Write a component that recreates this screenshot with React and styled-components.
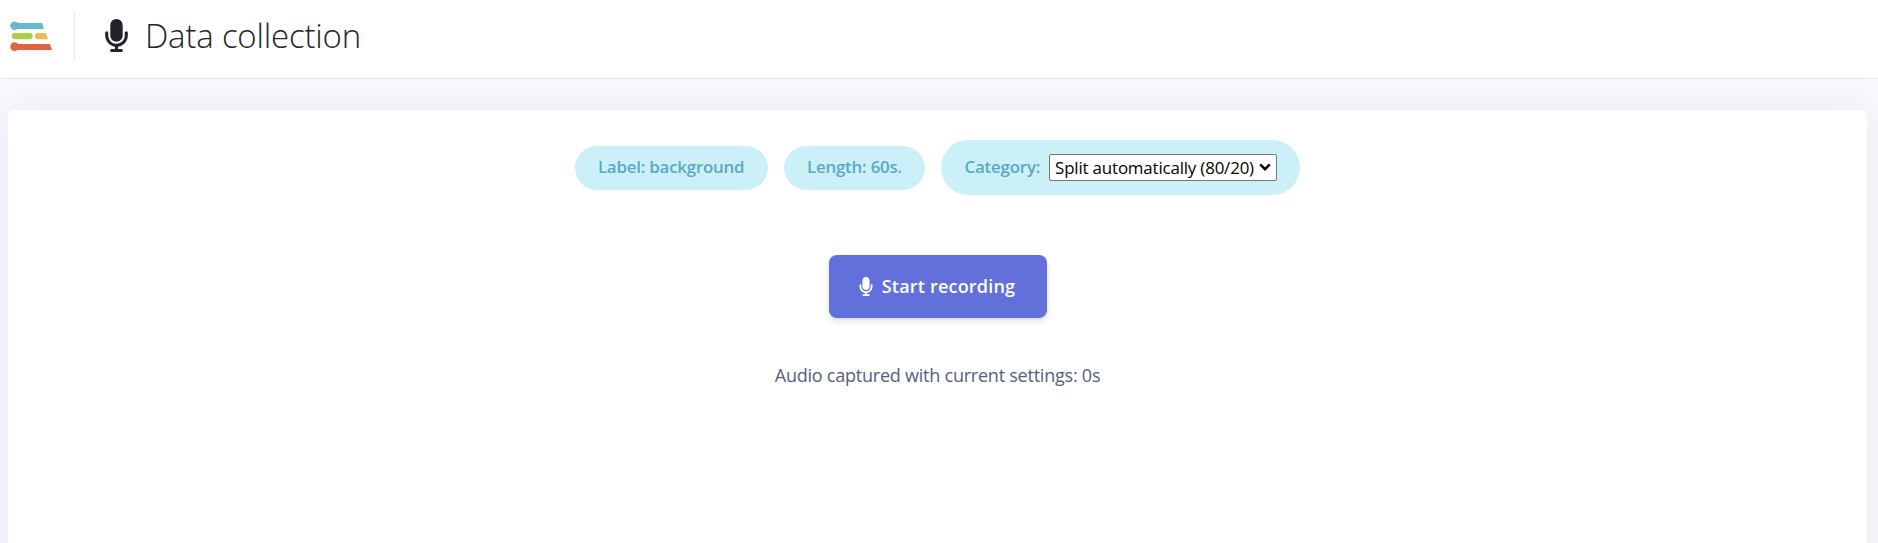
import React from "react";
import styled, { createGlobalStyle } from "styled-components";
import { FaMicrophone } from "react-icons/fa";

const GlobalStyle = createGlobalStyle`
  *, *::before, *::after { box-sizing: border-box; }
  body {
    margin: 0;
    background: #f8f9fe;
    color: #525f7f;
    font-family: "Open Sans", "Noto Sans", sans-serif;
    font-size: 18px;
    line-height: 1.5;
    overflow: hidden;
  }
`;

const Page = styled.div`
  display: flex;
  flex-direction: column;
  height: 100vh;
`;

const Header = styled.header`
  display: flex;
  align-items: center;
  flex: none;
  height: 79px;
  padding: 0 0 7px 10px;
  background: #fff;
  border-bottom: 1px solid #e3e5ee;
`;

const Logo = styled.svg`
  display: block;
  width: 42px;
  height: 32px;
`;

const Divider = styled.span`
  width: 1px;
  height: 48px;
  margin: 0 30px 0 22px;
  background: #e6e8ea;
`;

const MicIcon = styled(FaMicrophone)`
  flex: none;
  width: ${(p) => p.$width}px;
  height: ${(p) => p.$height}px;
`;

const Title = styled.h1`
  display: flex;
  align-items: center;
  gap: 17px;
  margin: 0;
  color: #212529;
  font-size: 33px;
  font-weight: 300;
  letter-spacing: -0.2px;
  line-height: 1;
`;

const Main = styled.main`
  display: flex;
  flex: 1;
  padding: 31px 11px 0 8px;
  overflow: hidden;
`;

const Card = styled.section`
  display: flex;
  flex: 1;
  flex-direction: column;
  align-items: center;
  height: 600px;
  padding-top: 30px;
  border-radius: 7px;
  background: #fff;
  box-shadow: 0 0 36px rgba(136, 152, 170, 0.15);
`;

const Settings = styled.div`
  display: flex;
  align-items: center;
  gap: 16px;
`;

const Pill = styled.div`
  display: flex;
  align-items: center;
  height: ${(p) => (p.$tall ? 55 : 44)}px;
  padding: 0 23.3px 1px;
  border-radius: 28px;
  background: #cbf0f8;
  color: #5ba8c4;
  font-size: 16.9px;
  font-weight: 600;
  letter-spacing: -0.22px;
  white-space: nowrap;
`;

const SelectBox = styled.span`
  display: grid;
  align-items: center;
  width: 228px;
  height: 27px;
  margin-left: 9px;

  & > * { grid-area: 1 / 1; }
`;

const Select = styled.select`
  appearance: none;
  width: 100%;
  height: 100%;
  padding: 0 5px;
  border: 1px solid #767676;
  border-radius: 2px;
  background: #fff;
  color: #000;
  font-family: inherit;
  font-size: 16.9px;
  font-weight: 400;
  letter-spacing: -0.17px;
`;

const Chevron = styled.svg`
  justify-self: end;
  width: 12px;
  height: 8px;
  margin-right: 6px;
  pointer-events: none;
`;

const RecordButton = styled.button`
  display: flex;
  align-items: center;
  justify-content: center;
  gap: 9px;
  width: 218px;
  height: 63px;
  margin-top: 60px;
  padding: 0 1px 1px 0;
  border: 0;
  border-radius: 8px;
  background: #6270db;
  color: #fff;
  font-family: inherit;
  font-size: 18px;
  font-weight: 600;
  letter-spacing: 0.2px;
  box-shadow: 0 4px 6px rgba(50, 50, 93, 0.11), 0 1px 3px rgba(0, 0, 0, 0.08);
`;

const Status = styled.p`
  margin: 44px 0 0;
  font-size: 18px;
  letter-spacing: -0.23px;
  line-height: 27px;
`;

export default function App() {
  return (
    <Page>
      <GlobalStyle />
      <Header>
        <Logo viewBox="0 0 42 32" aria-hidden="true">
          <path d="M4.5 3H32l2 6H4.5Z" fill="#67b9cc" />
          <circle cx="4.6" cy="5.8" r="4.3" fill="#67b9cc" />
          <rect x="1.7" y="13" width="21" height="6.2" rx="3.1" fill="#abd047" />
          <path d="M28 13h7.7l2.4 6.2H28a3.1 3.1 0 0 1 0-6.2Z" fill="#efb94d" />
          <path d="M4.5 24H40l2 6H4.5Z" fill="#e4633e" />
          <circle cx="4.6" cy="26.6" r="4.3" fill="#e4633e" />
        </Logo>
        <Divider />
        <Title>
          <MicIcon $width={23} $height={33} />
          Data collection
        </Title>
      </Header>
      <Main>
        <Card>
          <Settings>
            <Pill>Label: background</Pill>
            <Pill>Length: 60s.</Pill>
            <Pill as="label" $tall>
              Category:
              <SelectBox>
                <Select defaultValue="split">
                  <option value="split">Split automatically (80/20)</option>
                </Select>
                <Chevron viewBox="0 0 12 8" aria-hidden="true">
                  <path d="m1.2 1.4 4.8 4.8 4.8-4.8" fill="none" stroke="#000" strokeWidth="2.4" />
                </Chevron>
              </SelectBox>
            </Pill>
          </Settings>
          <RecordButton type="button">
            <MicIcon $width={14} $height={19} />
            Start recording
          </RecordButton>
          <Status>Audio captured with current settings: 0s</Status>
        </Card>
      </Main>
    </Page>
  );
}
